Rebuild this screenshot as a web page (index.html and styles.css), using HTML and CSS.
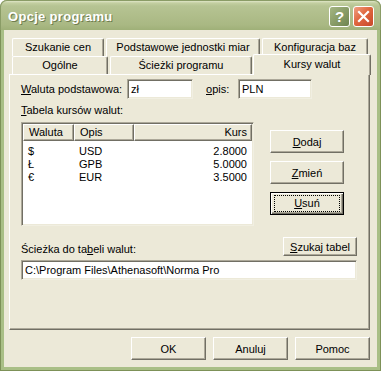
FILE: index.html
```html
<!DOCTYPE html>
<html lang="pl">
<head>
<meta charset="utf-8">
<title>Opcje programu</title>
<link rel="stylesheet" href="styles.css">
</head>
<body>
<div class="window">
  <div class="titlebar">
    <span class="title">Opcje programu</span>
    <div class="tb-buttons">
      <span class="tb-btn help">?</span>
      <span class="tb-btn close"><svg width="13" height="13" viewBox="0 0 13 13"><path d="M2 2 L11 11 M11 2 L2 11" stroke="#fff" stroke-width="2.2" stroke-linecap="square"/></svg></span>
    </div>
  </div>
  <div class="client">
    <div class="tabs">
      <div class="tabrow back">
        <div class="tab t1">Szukanie cen</div>
        <div class="tab t2">Podstawowe jednostki miar</div>
        <div class="tab t3">Konfiguracja baz</div>
      </div>
      <div class="tabrow front">
        <div class="tab t4">Ogólne</div>
        <div class="tab t5">Ścieżki programu</div>
        <div class="tab t6 active">Kursy walut</div>
      </div>
    </div>
    <div class="panel">
      <div class="row1">
        <label class="lbl-base"><u>W</u>aluta podstawowa:</label>
        <div class="input in-base">zł</div>
        <label class="lbl-opis"><u>o</u>pis:</label>
        <div class="input in-opis">PLN</div>
      </div>
      <div class="lbl-table"><u>T</u>abela kursów walut:</div>
      <div class="list-area">
        <div class="listview">
          <div class="lv-head">
            <div class="col c-wal">Waluta</div>
            <div class="col c-opis">Opis</div>
            <div class="col c-kurs">Kurs</div>
          </div>
          <div class="lv-row"><span class="c-wal">$</span><span class="c-opis">USD</span><span class="c-kurs">2.8000</span></div>
          <div class="lv-row"><span class="c-wal">Ł</span><span class="c-opis">GPB</span><span class="c-kurs">5.0000</span></div>
          <div class="lv-row"><span class="c-wal">€</span><span class="c-opis">EUR</span><span class="c-kurs">3.5000</span></div>
        </div>
        <div class="side-buttons">
          <button class="btn side"><u>D</u>odaj</button>
          <button class="btn side"><u>Z</u>mień</button>
          <button class="btn side default"><span class="focus"><u>U</u>suń</span></button>
        </div>
      </div>
      <div class="path-row">
        <div class="lbl-path">Ścieżka do ta<u>b</u>eli walut:</div>
        <button class="btn search"><u>S</u>zukaj tabel</button>
      </div>
      <div class="input in-path">C:\Program Files\Athenasoft\Norma Pro</div>
    </div>
    <div class="dialog-buttons">
      <button class="btn dlg">OK</button>
      <button class="btn dlg">Anuluj</button>
      <button class="btn dlg">Pomoc</button>
    </div>
  </div>
</div>
</body>
</html>
```

FILE: styles.css
```css
* { box-sizing: border-box; }
html, body { margin: 0; padding: 0; background: #fff; }
body {
  font-family: "Liberation Sans", Arial, sans-serif;
  font-size: 11px;
  color: #000;
}
.window {
  width: 381px;
  height: 371px;
  background: #a9bf86;
  border: 1px solid #7d9158;
  border-top: none;
  border-radius: 7px 7px 0 0;
  padding: 0 3px 3px;
  display: flex;
  flex-direction: column;
}
.titlebar {
  height: 30px;
  margin: 0 -4px;
  border-radius: 7px 7px 0 0;
  background: linear-gradient(#dfe6c7 0, #c3cfa1 2px, #b6c493 5px, #b0be8b 14px, #a9b883 24px, #9fb078 29px, #9cae76 30px);
  border: 1px solid #8a9c66;
  border-bottom: none;
  display: flex;
  align-items: center;
  padding: 0 6px 0 7px;
}
.title {
  flex: 1;
  color: #fff;
  font-weight: bold;
  font-size: 13px;
  letter-spacing: 0.3px;
  text-shadow: 1px 1px 0 #6f7d50;
  padding-top: 2px;
}
.tb-buttons { display: flex; gap: 3px; padding-top: 1px; }
.tb-btn {
  width: 21px;
  height: 21px;
  border: 1px solid #fff;
  border-radius: 3px;
  display: flex;
  align-items: center;
  justify-content: center;
  color: #fff;
  font-weight: bold;
  font-size: 15px;
}
.help {
  background: linear-gradient(135deg, #a4b683 0%, #8a9d68 50%, #6f8450 100%);
}
.close {
  background: linear-gradient(135deg, #f0a083 0%, #e0673f 45%, #c8482a 100%);
}
.client {
  flex: 1;
  background: #ece9d8;
  padding: 8px 7px 0 5px;
  display: flex;
  flex-direction: column;
}
.tabs { position: relative; height: 36px; }
.tabrow { display: flex; }
.tabrow.back { padding-left: 3px; gap: 1px; height: 18px; }
.tabrow.front { padding-left: 3px; gap: 1px; height: 18px; }
.tab {
  height: 18px;
  background: #ece9d8;
  border-top: 1px solid #fff;
  border-left: 1px solid #fff;
  border-right: 1px solid #716f64;
  box-shadow: inset -1px 0 0 #aca899;
  border-radius: 2px 2px 0 0;
  text-align: center;
  line-height: 16px;
}
.t1 { width: 92px; }
.t2 { width: 154px; margin-left: 1px; }
.t3 { width: 106px; margin-left: 1px; }
.t4 { width: 96px; }
.t5 { width: 142px; margin-left: 1px; }
.t6 { width: 118px; }
.tab.active {
  height: 21px;
  margin-top: -2px;
  margin-right: -1px;
  position: relative;
  z-index: 2;
  line-height: 18px;
}
.panel {
  height: 256px;
  border-top: 1px solid #fff;
  border-left: 1px solid #fff;
  border-right: 1px solid #716f64;
  border-bottom: 1px solid #716f64;
  box-shadow: inset -1px -1px 0 #aca899;
  padding: 4px 12px 0 11px;
}
.row1 { display: flex; align-items: center; height: 20px; }
.lbl-base { width: 106px; }
.lbl-opis { margin-left: 13px; width: 32px; }
.input {
  height: 20px;
  background: #fff;
  border-top: 1px solid #aca899;
  border-left: 1px solid #aca899;
  border-right: 1px solid #f1efe2;
  border-bottom: 1px solid #f1efe2;
  box-shadow: inset 1px 1px 0 #716f64, inset -1px -1px 0 #ece9d8;
  padding: 3px 3px 0 3px;
  line-height: 13px;
  white-space: nowrap;
}
.in-base { width: 66px; }
.in-opis { width: 74px; }
.lbl-table { margin-top: 4px; height: 14px; line-height: 14px; }
.list-area { display: flex; margin-top: 5px; }
.listview {
  width: 233px;
  height: 104px;
  background: #fff;
  border-top: 1px solid #aca899;
  border-left: 1px solid #aca899;
  border-right: 1px solid #f1efe2;
  border-bottom: 1px solid #f1efe2;
  box-shadow: inset 1px 1px 0 #716f64, inset -1px -1px 0 #ece9d8;
  padding: 1px 1px 0 1px;
}
.lv-head { display: flex; height: 17px; }
.lv-head .col {
  background: #ece9d8;
  border-top: 1px solid #fff;
  border-left: 1px solid #fff;
  border-right: 1px solid #716f64;
  border-bottom: 1px solid #716f64;
  box-shadow: inset -1px -1px 0 #aca899;
  line-height: 14px;
  padding: 0 4px 0 5px;
}
.c-wal { width: 51px; }
.c-opis { width: 60px; }
.c-kurs { flex: 1; text-align: right; }
.lv-row { display: flex; height: 13px; line-height: 13px; }
.lv-head + .lv-row { margin-top: 4px; }
.lv-row span { padding: 0 4px 0 5px; }
.lv-row .c-kurs { padding-right: 5px; }
.side-buttons {
  display: flex;
  flex-direction: column;
  gap: 8px;
  margin-left: 16px;
  padding-top: 8px;
}
.btn {
  font-family: "Liberation Sans", Arial, sans-serif;
  font-size: 11px;
  color: #000;
  background: #ece9d8;
  border-top: 1px solid #fff;
  border-left: 1px solid #fff;
  border-right: 1px solid #716f64;
  border-bottom: 1px solid #716f64;
  box-shadow: inset -1px -1px 0 #aca899;
  border-radius: 0;
  padding: 0;
  margin: 0;
  display: flex;
  align-items: center;
  justify-content: center;
}
.btn.side { width: 74px; height: 23px; }
.btn.default {
  border: 1px solid #000;
  box-shadow: inset 1px 1px 0 #fff, inset -1px -1px 0 #716f64, inset -2px -2px 0 #aca899;
}
.focus {
  display: block;
  width: 66px;
  height: 17px;
  line-height: 15px;
  text-align: center;
  border: 1px dotted #000;
}
.path-row {
  display: flex;
  justify-content: space-between;
  align-items: flex-end;
  margin-top: 11px;
  width: 336px;
}
.lbl-path { padding-bottom: 1px; }
.btn.search { width: 74px; height: 19px; }
.in-path { width: 336px; margin-top: 4px; }
.dialog-buttons {
  display: flex;
  justify-content: flex-end;
  gap: 7px;
  margin-top: 7px;
}
.btn.dlg { width: 75px; height: 23px; }
```
